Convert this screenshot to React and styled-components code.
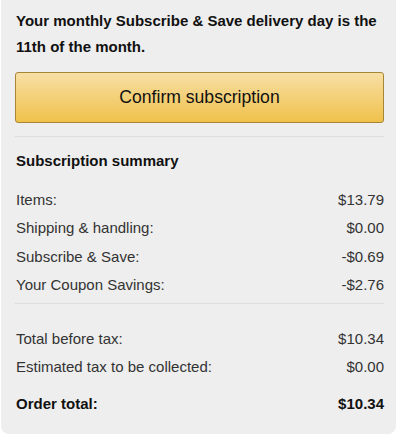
import React from 'react';
import styled, { createGlobalStyle } from 'styled-components';

const GlobalStyle = createGlobalStyle`
  body {
    margin: 0;
    background: #ffffff;
    font-family: Arial, "Liberation Sans", sans-serif;
    color: #111111;
  }
`;

const Panel = styled.div`
  width: 395px;
  margin-left: 1px;
  box-sizing: border-box;
  padding: 8px 12px 16px 14px;
  background: #eeeeee;
  border-radius: 0 0 8px 8px;
`;

const Notice = styled.div`
  font-size: 15px;
  font-weight: bold;
  line-height: 26px;
  padding-left: 1px;
`;

const ConfirmButton = styled.button`
  display: block;
  width: 100%;
  height: 51px;
  margin-top: 12px;
  border: 1px solid #a88734;
  border-radius: 3px;
  background: linear-gradient(to bottom, #f7dfa5, #f0c14b);
  font-family: inherit;
  font-size: 17.6px;
  color: #111111;
  cursor: pointer;
`;

const Divider = styled.hr`
  border: 0;
  border-top: 1px solid #dddddd;
  margin: ${p => p.$top || 0}px 0 0;
`;

const SectionTitle = styled.div`
  font-size: 15px;
  font-weight: bold;
  line-height: 20px;
  padding-left: 1px;
  margin-top: 14px;
  margin-bottom: 14px;
`;

const Row = styled.div`
  display: flex;
  justify-content: space-between;
  align-items: center;
  height: ${p => p.$h || 28.5}px;
  font-size: 15px;
  font-weight: ${p => (p.$bold ? 'bold' : 'normal')};
  color: ${p => (p.$bold ? '#111111' : '#333333')};
  padding-left: 1px;
`;

const Spacer = styled.div`
  height: ${p => p.$h}px;
`;

const items = [
  ['Items:', '$13.79'],
  ['Shipping & handling:', '$0.00'],
  ['Subscribe & Save:', '-$0.69'],
  ['Your Coupon Savings:', '-$2.76'],
];

const totals = [
  ['Total before tax:', '$10.34'],
  ['Estimated tax to be collected:', '$0.00'],
];

export default function App() {
  return (
    <>
      <GlobalStyle />
      <Panel>
        <Notice>
          Your monthly Subscribe &amp; Save delivery day is the 11th of the month.
        </Notice>
        <ConfirmButton>Confirm subscription</ConfirmButton>
        <Divider $top={13} />
        <SectionTitle>Subscription summary</SectionTitle>
        {items.map(([label, value]) => (
          <Row key={label}>
            <span>{label}</span>
            <span>{value}</span>
          </Row>
        ))}
        <Divider $top={4} />
        <Spacer $h={20} />
        {totals.map(([label, value]) => (
          <Row key={label}>
            <span>{label}</span>
            <span>{value}</span>
          </Row>
        ))}
        <Spacer $h={8} />
        <Row $bold>
          <span>Order total:</span>
          <span>$10.34</span>
        </Row>
      </Panel>
    </>
  );
}
